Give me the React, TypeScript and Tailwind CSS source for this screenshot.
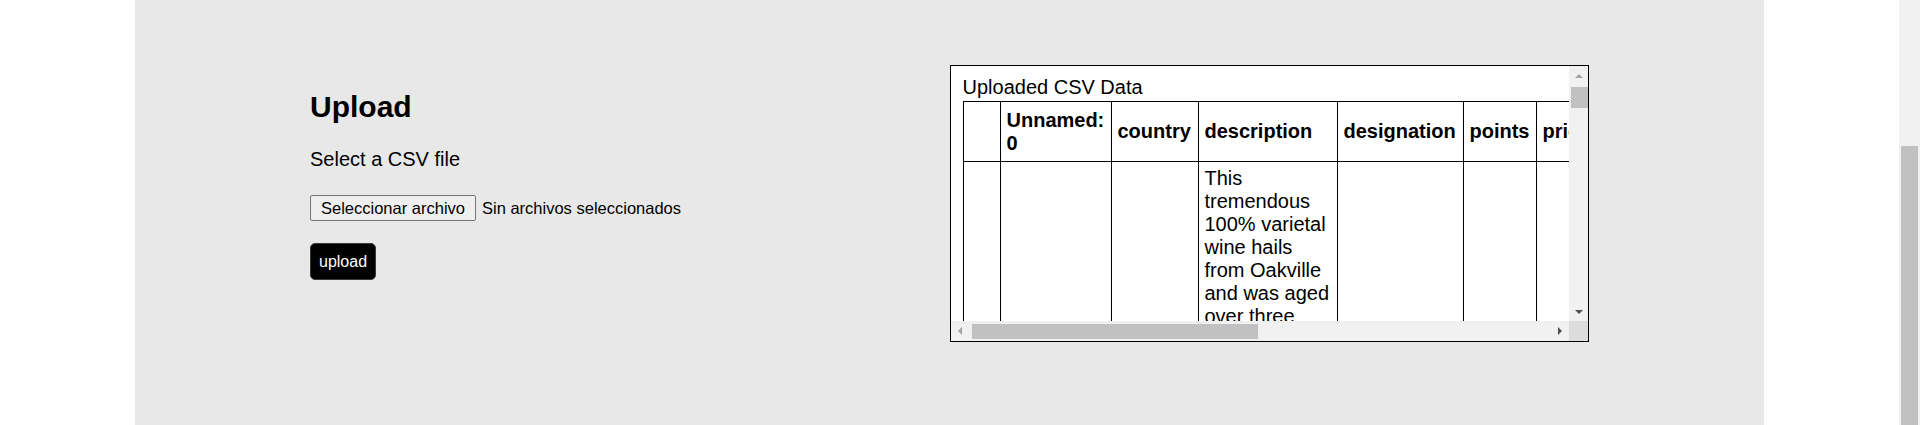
import React from "react";

type Row = {
  country: string;
  description: string;
  designation: string;
  points: number;
  price: string;
  province: string;
  region1: string;
  region2: string;
  variety: string;
  winery: string;
};

const rows: Row[] = [
  {
    country: "US",
    description:
      "This tremendous 100% varietal wine hails from Oakville and was aged over three years in oak. Juicy red-cherry fruit and a compelling hint of caramel greet the palate, framed by elegant, fine tannins and a subtle minty tone in the background. Balanced and rewarding from start to finish, it has years ahead of it to develop further nuance. Enjoy 2022–2030.",
    designation: "Martha's Vineyard",
    points: 96,
    price: "235.0",
    province: "California",
    region1: "Napa Valley",
    region2: "Napa",
    variety: "Cabernet Sauvignon",
    winery: "Heitz",
  },
  {
    country: "Spain",
    description:
      "Ripe aromas of fig, blackberry and cassis are softened and sweetened by a slathering of oaky chocolate and vanilla. This is full, layered, intense and cushioned on the palate, with rich flavors of chocolaty black fruits and baking spices. A toasty, everlasting finish is heady but ideally balanced. Drink through 2023.",
    designation: "Carodorum Selección Especial Reserva",
    points: 96,
    price: "110.0",
    province: "Northern Spain",
    region1: "Toro",
    region2: "",
    variety: "Tinta de Toro",
    winery: "Bodega Carmen Rodríguez",
  },
  {
    country: "US",
    description:
      "Mac Watson honors the memory of a wine once made by his mother in this tremendously delicious, balanced and complex botrytised white. Dark gold in color, it layers toasted hazelnut, vanilla custard, caramel, and a host of sweet and rich flavors with a long, rich finish.",
    designation: "Special Selected Late Harvest",
    points: 96,
    price: "90.0",
    province: "California",
    region1: "Knights Valley",
    region2: "Sonoma",
    variety: "Sauvignon Blanc",
    winery: "Macauley",
  },
  {
    country: "US",
    description:
      "This spent 20 months in 30% new French oak, and incorporates fruit from Ponzi's Aurora, Abetina and Madrona vineyards, among others. Aromatic, dense and toasty, it deftly blends aromas and flavors of toast, cigar box, blackberry, black cherry, coffee and graphite. Tannins are polished to a fine sheen, and frame a finish loaded with dark chocolate and espresso. Drink now through 2032.",
    designation: "Reserve",
    points: 96,
    price: "65.0",
    province: "Oregon",
    region1: "Willamette Valley",
    region2: "Willamette Valley",
    variety: "Pinot Noir",
    winery: "Ponzi",
  },
  {
    country: "France",
    description:
      "This is the top wine from La Bégude, named after the highest point in the vineyard at 1200 feet. It has structure, density and considerable acidity that is still calming down. With 18 months in wood, the wine has developing an extra richness and concentration. Produced by the Tari family, formerly of Château Giscours in Margaux, it is a wine made for aging. Drink from 2020.",
    designation: "La Brûlade",
    points: 95,
    price: "66.0",
    province: "Provence",
    region1: "Bandol",
    region2: "",
    variety: "Provence red blend",
    winery: "Domaine de la Bégude",
  },
  {
    country: "Spain",
    description:
      "Deep, dense and pure from the opening bell, this Toro is a winner. Aromas of dark ripe black fruits are cool and moderately oaked. This feels massive on the palate but sensationally balanced. Flavors of blackberry, coffee, mocha and toasty oak finish spicy, smooth and heady. Drink this exemplary Toro through 2023.",
    designation: "Numanthia",
    points: 95,
    price: "73.0",
    province: "Northern Spain",
    region1: "Toro",
    region2: "",
    variety: "Tinta de Toro",
    winery: "Numanthia",
  },
  {
    country: "Spain",
    description:
      "Slightly gritty black-fruit aromas include a sweet note of pastry along with a hint of prune. Wall-to-wall saturation ensures that all corners of one's mouth are covered. Flavors of blackberry, mocha and chocolate are highly impressive and expressive, while this settles nicely on a long finish. Drink now through 2024.",
    designation: "San Román",
    points: 95,
    price: "65.0",
    province: "Northern Spain",
    region1: "Toro",
    region2: "",
    variety: "Tinta de Toro",
    winery: "Maurodos",
  },
];

const headers = [
  "",
  "Unnamed: 0",
  "country",
  "description",
  "designation",
  "points",
  "price",
  "province",
  "region_1",
  "region_2",
  "variety",
  "winery",
];

const cell = "border border-black px-[6px] py-[5px] align-middle";

// scrollbar arrow glyphs
function Arrow({ dir, dim }: { dir: "up" | "down" | "left" | "right"; dim?: boolean }) {
  const fill = dim ? "#a3a3a3" : "#505050";
  const vertical = dir === "up" || dir === "down";
  const pts = {
    up: "0,4 4,0 8,4",
    down: "0,0 8,0 4,4",
    left: "4,0 4,8 0,4",
    right: "0,0 4,4 0,8",
  }[dir];
  return (
    <svg width={vertical ? 8 : 4} height={vertical ? 4 : 8} viewBox={vertical ? "0 0 8 4" : "0 0 4 8"}>
      <polygon points={pts} fill={fill} />
    </svg>
  );
}

function CsvTable() {
  return (
    <div className="grid h-[277px] w-full grid-cols-[minmax(0,1fr)_19px] grid-rows-[minmax(0,1fr)_20px] border border-black bg-white">
      <div className="overflow-hidden pl-[12px] pt-[10px] text-[20px] leading-[23px]">
        <div className="mb-[2px]">Uploaded CSV Data</div>
        <table className="w-[1240px] table-fixed border-collapse border border-black">
          <colgroup>
            <col className="w-[37px]" />
            <col className="w-[111px]" />
            <col className="w-[87px]" />
            <col className="w-[139px]" />
            <col className="w-[126px]" />
            <col className="w-[73px]" />
            <col className="w-[73px]" />
            <col className="w-[120px]" />
            <col className="w-[125px]" />
            <col className="w-[110px]" />
            <col className="w-[130px]" />
            <col className="w-[109px]" />
          </colgroup>
          <thead>
            <tr className="h-[60px]">
              {headers.map((h, i) => (
                <th key={i} className={`${cell} text-left font-bold`}>
                  {h}
                </th>
              ))}
            </tr>
          </thead>
          <tbody>
            {rows.map((r, i) => (
              <tr key={i}>
                <td className={cell}>{i}</td>
                <td className={cell}>{i}</td>
                <td className={cell}>{r.country}</td>
                <td className={cell}>{r.description}</td>
                <td className={cell}>{r.designation}</td>
                <td className={cell}>{r.points}</td>
                <td className={cell}>{r.price}</td>
                <td className={cell}>{r.province}</td>
                <td className={cell}>{r.region1}</td>
                <td className={cell}>{r.region2}</td>
                <td className={cell}>{r.variety}</td>
                <td className={cell}>{r.winery}</td>
              </tr>
            ))}
          </tbody>
        </table>
      </div>

      {/* vertical scrollbar */}
      <div className="flex flex-col bg-[#f1f1f1]">
        <div className="flex h-[19px] items-center justify-center">
          <Arrow dir="up" dim />
        </div>
        <div className="flex-1 pl-[2px] pt-[2px]">
          <div className="h-[21px] bg-[#c1c1c1]" />
        </div>
        <div className="flex h-[19px] items-center justify-center">
          <Arrow dir="down" />
        </div>
      </div>

      {/* horizontal scrollbar */}
      <div className="flex bg-[#f1f1f1]">
        <div className="flex w-[19px] items-center justify-center">
          <Arrow dir="left" dim />
        </div>
        <div className="flex flex-1 items-center pl-[2px]">
          <div className="h-[15px] w-[286px] bg-[#c1c1c1]" />
        </div>
        <div className="flex w-[19px] items-center justify-center">
          <Arrow dir="right" />
        </div>
      </div>
      <div className="bg-[#dcdcdc]" />
    </div>
  );
}

export default function App() {
  return (
    <div className="flex h-[425px] w-full overflow-hidden bg-white font-['Liberation_Sans',Arial,sans-serif] text-black">
      <div className="flex flex-1 justify-center">
        <main className="grid w-[1629px] grid-cols-2 items-start bg-[#e8e8e8] px-[175px] pt-[65px]">
          <section className="pt-[24px]">
            <h1 className="text-[30px] font-bold leading-[35px]">Upload</h1>
            <p className="mt-[24px] text-[20px] leading-[23px]">Select a CSV file</p>
            <div className="mt-[24px] flex items-center gap-[6px] text-[16.5px]">
              <button className="h-[26px] rounded-[2px] border border-[#767676] bg-[#efefef] px-[10px] leading-[24px]">
                Seleccionar archivo
              </button>
              <span>Sin archivos seleccionados</span>
            </div>
            <button className="mt-[22px] h-[37px] rounded-[5px] border border-[#3a3a3a] bg-black px-[8px] text-[16px] text-white">
              upload
            </button>
          </section>
          <section>
            <CsvTable />
          </section>
        </main>
      </div>
      <div className="flex w-[21px] flex-col bg-[#f1f1f1] px-[2px]">
        <div className="h-[146px]" />
        <div className="flex-1 bg-[#c1c1c1]" />
      </div>
    </div>
  );
}
